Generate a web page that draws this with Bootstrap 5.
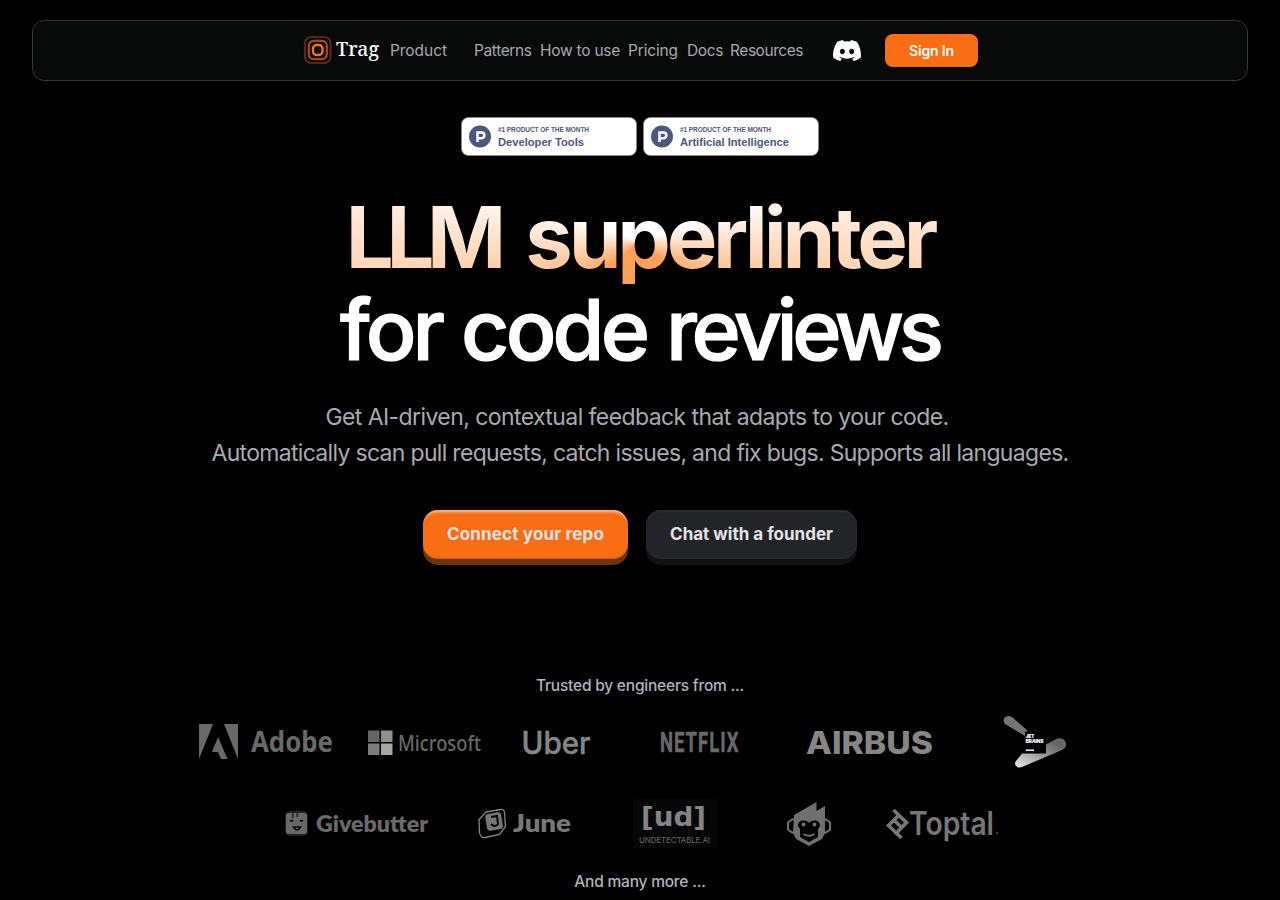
<!DOCTYPE html>
<html lang="en" data-bs-theme="dark">
<head>
<meta charset="utf-8">
<meta name="viewport" content="width=device-width, initial-scale=1">
<title>Trag</title>
<link href="https://cdn.jsdelivr.net/npm/bootstrap@5.3.0/dist/css/bootstrap.min.css" rel="stylesheet">
<style>
body{background:#000;font-family:Inter,"Liberation Sans",sans-serif;height:900px;overflow:hidden}
svg{display:block;flex:none;overflow:visible}
.topbar{height:61px;margin:20px 32px 0;background:#080a09;border:1px solid #33373a;border-radius:12px;padding:0 0 0 271px}
.topbar .nav-link{color:#a7a9b0;font-size:15.5px;white-space:nowrap;line-height:24px;padding:0;letter-spacing:-.3px;flex:none}
.topbar .n-product{width:84px;letter-spacing:-.06px}
.topbar .n-patterns{width:66px;letter-spacing:-.38px}
.topbar .n-howto{width:88px;letter-spacing:-.25px}
.topbar .n-pricing{width:59px;letter-spacing:-.17px}
.topbar .n-docs{width:43px;letter-spacing:-.4px}
.topbar .n-resources{width:103px;letter-spacing:-.45px}
.btn-sign{background:#f96d15;color:#fff;width:93px;height:33px;border-radius:8px;font-size:14px;font-weight:600;padding:0;line-height:32px;letter-spacing:-.18px;margin-left:24px}
.awards{margin-top:36px;gap:6px}
.hero-title{font-size:84px;line-height:92px;margin:36px 0 0;color:#fff;white-space:nowrap}
.hero-line{height:92px;padding-left:4px}
.hero-main{font-weight:500;gap:16px;-webkit-text-stroke:1.2px #fff}
.glow{font-size:85px;font-weight:700;gap:19px;width:602px;margin:0 auto;background:conic-gradient(at 50% 54%,#fff 70deg,#ffa057 130deg,#ffa057 230deg,#fff 290deg);-webkit-background-clip:text;background-clip:text;color:transparent}
.w-llm{letter-spacing:-7.4px;margin-right:7.4px}
.w-super{letter-spacing:-4.22px;margin-right:4.22px}
.w-for{letter-spacing:-3.92px;margin-right:3.92px}
.w-code{letter-spacing:-3.83px;margin-right:3.83px}
.w-reviews{letter-spacing:-5.48px;margin-right:5.48px}
.tagline{font-size:23px;line-height:36px;color:#a9abb2;margin-top:23px;white-space:nowrap;letter-spacing:-.69px}
.tagline-lead{letter-spacing:-.58px;margin-right:6px}
.cta-row{margin-top:39px;gap:18px}
.cta{height:49px;border-radius:15px;font-weight:700;font-size:17px;color:#e4e4e7;padding:0;line-height:48px;text-align:center;text-decoration:none}
.cta-main{width:205px;letter-spacing:.17px;background:#f96d15;box-shadow:inset 0 4px 3px -2px #ffc08d,inset 0 -2px 2px -1px #d95c10,0 6px 0 #6b350d}
.cta-dark{width:211px;background:#232427;box-shadow:inset 0 2px 2px #2c2d30,inset 0 -1px 2px #2c2d30,0 6px 0 #111214}
.note{font-size:15.5px;font-weight:500;color:#b1b4bd;line-height:24px;letter-spacing:-.21px;margin:0}
.note-top{margin-top:115px}
.note-end{margin-top:20px}
.logos{fill:#696969;margin:16px 0 0 198px}
.logos-second{margin:28px 0 0 284px}
</style>
</head>
<body>
<nav class="topbar d-flex align-items-center">
<svg width="86" height="30" viewBox="0 0 86 30"><g fill="none"><rect x="1" y="1" width="25.500" height="26" rx="6" stroke="#57290d" stroke-width="2.200"/><rect x="4.800" y="4.800" width="18" height="18.400" rx="5" stroke="#a54c13" stroke-width="2.200"/><rect x="9" y="9" width="9.500" height="10" rx="3.500" stroke="#f97016" stroke-width="2.400"/></g><text x="32" y="20" font-family="Noto Serif,DejaVu Serif,serif" font-size="20" font-weight="500" fill="#fff" textLength="43" lengthAdjust="spacingAndGlyphs">Trag</text></svg>
<a class="nav-link n-product" href="#">Product</a>
<a class="nav-link n-patterns" href="#">Patterns</a>
<a class="nav-link n-howto" href="#">How to use</a>
<a class="nav-link n-pricing" href="#">Pricing</a>
<a class="nav-link n-docs" href="#">Docs</a>
<a class="nav-link n-resources" href="#">Resources</a>
<svg width="28" height="21" viewBox="0 0 127 96" preserveAspectRatio="none"><path fill="#fff" d="M107.7 8.1A105 105 0 0 0 81.5 0a72 72 0 0 0-3.4 6.8 97.700 97.700 0 0 0-29.100 0A72 72 0 0 0 45.600 0a106 106 0 0 0-26.200 8.100C2.800 32.700-1.700 56.600.5 80.200a105.700 105.700 0 0 0 32.200 16.200 77.700 77.700 0 0 0 6.900-11.100 68.400 68.400 0 0 1-10.900-5.200l2.700-2a75.600 75.600 0 0 0 64.300 0l2.700 2a68.700 68.700 0 0 1-10.900 5.200 77 77 0 0 0 6.900 11.100 105.200 105.200 0 0 0 32.200-16.200c2.600-27.300-4.500-51-18.900-72.100ZM42.500 65.700c-6.300 0-11.500-5.700-11.500-12.700s5-12.700 11.400-12.700S54 46 53.900 53s-5 12.700-11.400 12.700Zm42.200 0c-6.300 0-11.400-5.700-11.400-12.700s5-12.700 11.400-12.700S96.200 46 96.100 53s-5 12.700-11.400 12.700Z"/></svg>
<a class="btn btn-sign" href="#">Sign In</a>
</nav>
<main class="text-center">
<div class="awards d-flex justify-content-center">
<svg width="176" height="39" viewBox="0 0 176 39"><rect x=".5" y=".5" width="175" height="38" rx="7" fill="#fff" stroke="#8b8f9a" stroke-width=".6"/><circle cx="19" cy="19.500" r="11" fill="#4b587c"/><path d="M16.500 25v-9.500h4a2.800 2.800 0 0 1 0 5.700h-4" fill="none" stroke="#fff" stroke-width="2.500"/><g fill="#4b587c" font-family="Liberation Sans,sans-serif" font-weight="700"><text x="37" y="15" font-size="6.500" textLength="91">#1 PRODUCT OF THE MONTH</text><text x="37" y="29" font-size="11.500" textLength="86" lengthAdjust="spacingAndGlyphs">Developer Tools</text></g></svg>
<svg width="176" height="39" viewBox="0 0 176 39"><rect x=".5" y=".5" width="175" height="38" rx="7" fill="#fff" stroke="#8b8f9a" stroke-width=".6"/><circle cx="19" cy="19.500" r="11" fill="#4b587c"/><path d="M16.500 25v-9.500h4a2.800 2.800 0 0 1 0 5.700h-4" fill="none" stroke="#fff" stroke-width="2.500"/><g fill="#4b587c" font-family="Liberation Sans,sans-serif" font-weight="700"><text x="37" y="15" font-size="6.500" textLength="91">#1 PRODUCT OF THE MONTH</text><text x="37" y="29" font-size="11.500" textLength="109" lengthAdjust="spacingAndGlyphs">Artificial Intelligence</text></g></svg>
</div>
<h1 class="hero-title">
<span class="hero-line glow d-flex justify-content-center"><span class="w-llm">LLM</span><span class="w-super">superlinter</span></span>
<span class="hero-line hero-main d-flex justify-content-center"><span class="w-for">for</span><span class="w-code">code</span><span class="w-reviews">reviews</span></span>
</h1>
<p class="tagline mb-0"><span class="tagline-lead">Get AI-driven, contextual feedback that adapts to your code.</span><br>Automatically scan pull requests, catch issues, and fix bugs. Supports all languages.</p>
<div class="cta-row d-flex justify-content-center">
<a class="cta cta-main" href="#">Connect your repo</a>
<a class="cta cta-dark" href="#">Chat with a founder</a>
</div>
<p class="note note-top">Trusted by engineers from ...</p>
<div class="logos d-flex">
<svg width="169" height="56" viewBox="198 714 169 56"><path d="M199 724h14l-14 35Zm25 0h14v35Zm-6 13 9.500 22h-6.500l-3-7h-6Z"/><text x="251" y="752" font-family="Noto Sans,Open Sans" font-weight="700" font-size="28" textLength="82" lengthAdjust="spacingAndGlyphs">Adobe</text></svg>
<svg width="156" height="56" viewBox="367 714 156 56"><path fill="#666" d="M368 730.500h11.500V742H368z"/><path fill="#909090" d="M381 730.500h11.500V742H381z"/><path fill="#7d7d7d" d="M368 743.500h11.500V755H368z"/><path fill="#a7a7a7" d="M381 743.500h11.500V755H381z"/><text x="398" y="750.500" font-family="Noto Sans,Open Sans" font-weight="500" font-size="21" textLength="83" lengthAdjust="spacingAndGlyphs">Microsoft</text></svg>
<svg width="137" height="56" viewBox="523 714 137 56" fill="#858585"><text x="521.500" y="753.500" stroke="#858585" stroke-width=".5" font-family="Inter" font-weight="500" font-size="31" textLength="69" lengthAdjust="spacingAndGlyphs">Uber</text></svg>
<svg width="146" height="56" viewBox="660 714 146 56"><text transform="translate(660 752) scale(.66 1)" font-family="Roboto" font-weight="700" stroke="#696969" stroke-width=".5" font-size="28" textLength="119">NETFLIX</text></svg>
<svg width="197" height="56" viewBox="806 714 197 56" fill="#868686"><text x="806" y="753.500" font-family="Inter" font-weight="800" font-size="31" textLength="127" lengthAdjust="spacingAndGlyphs">AIRBUS</text></svg>
<svg width="64" height="56" viewBox="1003 714 64 56"><defs><linearGradient id="jb" x1="0" y1="1" x2="1" y2="0"><stop stop-color="#e8e8e8"/><stop offset=".8" stop-color="#666"/></linearGradient></defs><path fill="#747474" d="M1005 724c-4-6 2-10 7-7l16 14-3 1 0 4-20-12Z"/><path fill="url(#jb)" d="M1022 753.500h24v-9l10-5.500c9-4 14 7 6 11l-40 17c-5 2-9-3-6-6Z"/><g fill="#fff" font-family="Inter" font-weight="900" font-size="5"><text x="1025.500" y="737.500" textLength="9">JET</text><text x="1025.500" y="742.500" textLength="18">BRAINS</text></g><path fill="#fff" d="M1026 749.500h8v1.500h-8z"/></svg>
</div>
<div class="logos logos-second d-flex">
<svg width="193" height="52" viewBox="284 798 193 52"><rect x="285" y="811" width="23" height="25" rx="5" fill="#222"/><path d="M289 813h3v5h1.500v-5h3v4h1.500v-4h6a3 3 0 0 1 3 3v15a3 3 0 0 1-3 3h-15a3 3 0 0 1-3-3v-15a3 3 0 0 1 3-3Z"/><path fill="none" stroke="#080808" stroke-width="1.500" d="M290 821.500q1.500-2 3 0m7 0q1.500-2 3 0M293.500 827q3.500 6 7 0Z"/><text x="316" y="832" font-family="Lato" font-weight="800" font-size="23" textLength="112" lengthAdjust="spacingAndGlyphs">Givebutter</text></svg>
<svg width="156" height="52" viewBox="477 798 156 52"><path fill="none" stroke="#858585" stroke-width="1.300" d="m486 812 14-2.500q4-1 4.500 3l1 14-6 8-14 3q-5 1-6-5l-.5-13Z"/><rect x="486" y="813" width="16" height="17" rx="3" transform="rotate(-9 494 821)" fill="#777"/><path fill="none" stroke="#050505" stroke-width="2" d="m491 817 6-1 1 8q-3 4-7 0"/><text x="513" y="832" fill="#777" font-family="Lato" font-weight="800" font-size="24" textLength="58" lengthAdjust="spacingAndGlyphs">June</text></svg>
<svg width="153" height="52" viewBox="633 798 153 52"><path fill="#070707" d="M633 799h84v49h-84z"/><text x="641" y="826" fill="#858585" font-family="DejaVu Sans" font-weight="700" font-size="27" textLength="65" lengthAdjust="spacingAndGlyphs">[ud]</text><text x="639" y="843" fill="#666" font-family="Inter" font-size="8" textLength="71">UNDETECTABLE.AI</text></svg>
<svg width="100" height="52" viewBox="786 798 100 52"><path fill="none" stroke="#707070" stroke-width="2" d="M796 819.500h-4l-4 3v7l4 3h4M822 819.500h4l4 3v7l-4 3h-4"/><path fill="#707070" d="m794 815 22.500-13v9l8.500-5v27l-3 6-13 7-13-7-3-6Z"/><path fill="#000" d="M798 826c0-6 7-7 11-3 4-4 11-3 11 3l-2 3v8l-9 5-9-5v-8Z"/><g fill="#707070"><circle cx="803.500" cy="824.500" r="1.900"/><circle cx="814.500" cy="824.500" r="1.900"/></g><path fill="none" stroke="#707070" stroke-width="2" d="M803.500 834q5.500 3.500 11 0"/></svg>
<svg width="112" height="52" viewBox="886 798 112 52"><path fill="none" stroke="#777" stroke-width="3.600" d="m893.500 810 13 12.500-11.500 12M899.500 814.500l-11 11 13 12.500M894 820l7.500 7.500"/><text x="909" y="834.500" fill="#777" font-family="Inter" font-weight="600" font-size="32" textLength="85" lengthAdjust="spacingAndGlyphs">Toptal</text><circle cx="997" cy="833" r="1" fill="#555"/></svg>
</div>
<p class="note note-end">And many more ...</p>
</main>
</body>
</html>
